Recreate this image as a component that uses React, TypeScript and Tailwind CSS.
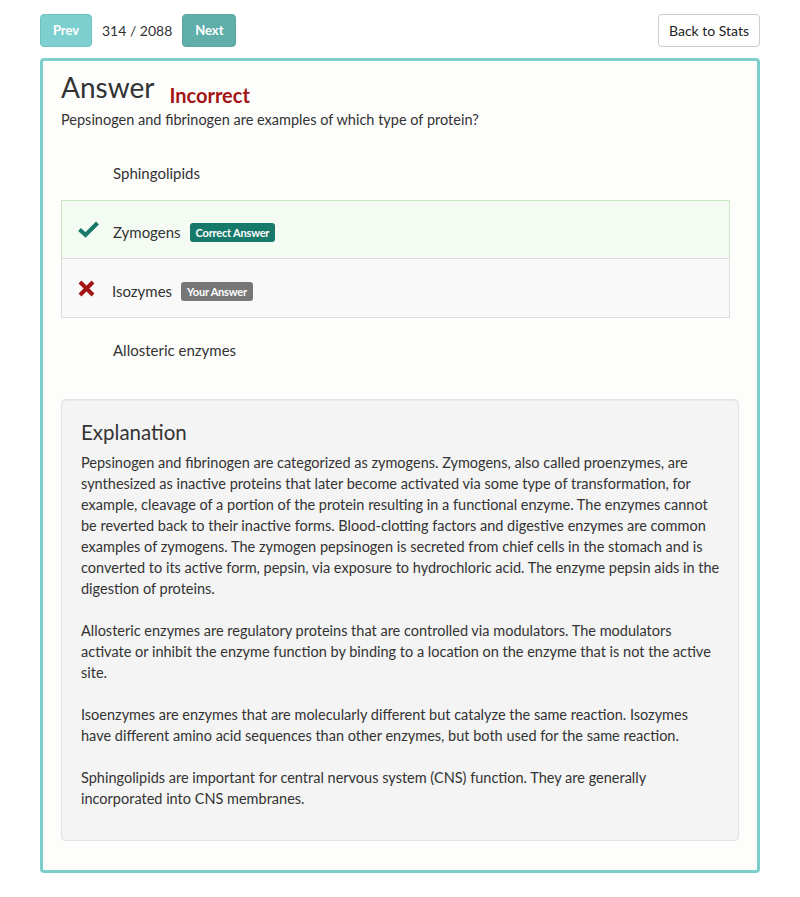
import React from 'react';

// explanation lines, broken where the original page breaks them
const paragraphs: string[][] = [
  [
    'Pepsinogen and fibrinogen are categorized as zymogens. Zymogens, also called proenzymes, are',
    'synthesized as inactive proteins that later become activated via some type of transformation, for',
    'example, cleavage of a portion of the protein resulting in a functional enzyme. The enzymes cannot',
    'be reverted back to their inactive forms. Blood-clotting factors and digestive enzymes are common',
    'examples of zymogens. The zymogen pepsinogen is secreted from chief cells in the stomach and is',
    'converted to its active form, pepsin, via exposure to hydrochloric acid. The enzyme pepsin aids in the',
    'digestion of proteins.',
  ],
  [
    'Allosteric enzymes are regulatory proteins that are controlled via modulators. The modulators',
    'activate or inhibit the enzyme function by binding to a location on the enzyme that is not the active',
    'site.',
  ],
  [
    'Isoenzymes are enzymes that are molecularly different but catalyze the same reaction. Isozymes',
    'have different amino acid sequences than other enzymes, but both used for the same reaction.',
  ],
  [
    'Sphingolipids are important for central nervous system (CNS) function. They are generally',
    'incorporated into CNS membranes.',
  ],
];

function CheckIcon() {
  return (
    <svg width="21" height="17" viewBox="0 0 21 17" className="text-[#17796a]">
      <path d="M1.5 8.5 L7.5 14 L19.5 2" fill="none" stroke="currentColor" strokeWidth="4" />
    </svg>
  );
}

function CrossIcon() {
  return (
    <svg width="17" height="17" viewBox="0 0 17 17" className="text-[#a31515]">
      <path d="M2 2 L15 15 M15 2 L2 15" fill="none" stroke="currentColor" strokeWidth="4" />
    </svg>
  );
}

type Option = {
  label: string;
  state?: 'correct' | 'wrong';
};

const options: Option[] = [
  { label: 'Sphingolipids' },
  { label: 'Zymogens', state: 'correct' },
  { label: 'Isozymes', state: 'wrong' },
  { label: 'Allosteric enzymes' },
];

function OptionRow({ option }: { option: Option }) {
  if (option.state === 'correct') {
    return (
      <div className="flex h-[59px] items-center border border-[#c8e6c2] bg-[#f4fbf2] pl-4">
        <div className="flex w-[35px] items-center">
          <CheckIcon />
        </div>
        <div className="mt-[6px] flex items-center">
          <span className="text-[15px] text-[#333]">{option.label}</span>
          <span className="ml-[9px] rounded-[3px] bg-[#17796a] px-[6px] py-[2px] text-[11px] font-bold leading-[15px] tracking-[-0.2px] text-white">
            Correct Answer
          </span>
        </div>
      </div>
    );
  }
  if (option.state === 'wrong') {
    return (
      <div className="-mt-px flex h-[60px] items-center border border-[#dcdcdc] bg-[#f9f9f9] pl-4">
        <div className="flex w-[34px] items-center">
          <CrossIcon />
        </div>
        <div className="mt-[6px] flex items-center">
          <span className="text-[15px] text-[#333]">{option.label}</span>
          <span className="ml-[9px] rounded-[3px] bg-[#777] px-[6px] py-[2px] text-[11px] font-bold leading-[15px] tracking-[-0.2px] text-white">
            Your Answer
          </span>
        </div>
      </div>
    );
  }
  return (
    <div className="flex h-[59px] items-center pl-[52px]">
      <span className="mt-[6px] text-[15px] text-[#333]">{option.label}</span>
    </div>
  );
}

export default function App() {
  return (
    <div
      className="min-h-[897px] bg-white px-10 pt-[14px] text-[#333]"
      style={{ fontFamily: 'Lato, "Noto Sans", sans-serif' }}
    >
      <div className="flex items-center justify-between">
        <div className="flex items-center">
          <button className="h-[33px] w-[52px] rounded-[4px] border border-[#6fc2c2] bg-[#7dd0cf] text-[13px] font-bold text-white">
            Prev
          </button>
          <span className="ml-[10px] mr-[10px] text-[14px] text-[#333]">314 / 2088</span>
          <button className="h-[33px] w-[54px] rounded-[4px] border border-[#5aa8a4] bg-[#60aeaa] text-[13px] font-bold text-white">
            Next
          </button>
        </div>
        <button className="h-[33px] w-[102px] rounded-[4px] border border-[#cccccc] bg-white text-[14px] text-[#222]">
          Back to Stats
        </button>
      </div>

      <div className="mt-[11px] rounded-[4px] border-[3px] border-[#7ccfcc] bg-[#fdfdfc] px-[18px] pb-[29px] pt-[7px]">
        <div className="flex items-end">
          <h1 className="text-[28px] leading-[38px] text-[#333]">Answer</h1>
          <span className="ml-[15px] text-[20px] font-bold leading-[22px] text-[#a31515]">Incorrect</span>
        </div>
        <p className="mt-[4px] text-[14.5px] leading-[20px] text-[#333]">
          Pepsinogen and fibrinogen are examples of which type of protein?
        </p>

        <div className="mr-[9px] mt-[11px]">
          {options.map((o) => (
            <OptionRow key={o.label} option={o} />
          ))}
        </div>

        <div className="mt-[22px] rounded-[4px] border border-[#e3e3e3] bg-[#f4f4f4] px-[19px] pb-[10px] pt-[17px] shadow-[inset_0_1px_1px_rgba(0,0,0,0.05)]">
          <h2 className="text-[20.5px] leading-[30px] text-[#333]">Explanation</h2>
          <div className="mt-[5px]">
            {paragraphs.map((lines, i) => (
              <p key={i} className="mb-[21px] text-[14.5px] leading-[21px] text-[#333]">
                {lines.map((l, j) => (
                  <span key={j} className="block whitespace-nowrap">
                    {l}
                  </span>
                ))}
              </p>
            ))}
          </div>
        </div>
      </div>
    </div>
  );
}
